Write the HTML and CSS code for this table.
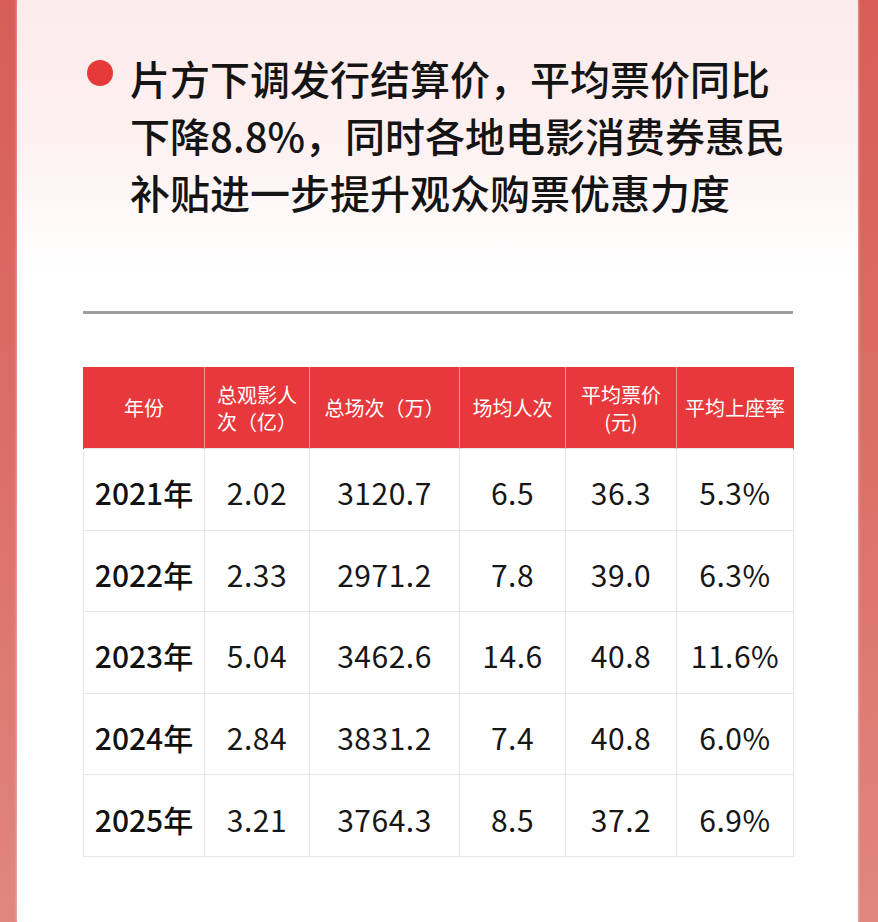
FILE: index.html
```html
<!DOCTYPE html>
<html lang="zh-CN">
<head>
<meta charset="utf-8">
<title>电影市场数据</title>
<link rel="stylesheet" href="styles.css">
</head>
<body>
<div class="page">
  <div class="card">
    <div class="title">
      <span class="dot"></span>
      <h1 class="title-text">片方下调发行结算价，平均票价同比<br>下降8.8%，同时各地电影消费券惠民<br>补贴进一步提升观众购票优惠力度</h1>
    </div>
    <div class="rule"></div>
    <table class="data">
      <colgroup>
        <col class="c1"><col class="c2"><col class="c3"><col class="c4"><col class="c5"><col class="c6">
      </colgroup>
      <thead>
        <tr>
          <th>年份</th>
          <th>总观影人<br>次（亿）</th>
          <th>总场次（万）</th>
          <th>场均人次</th>
          <th>平均票价<br>(元)</th>
          <th>平均上座率</th>
        </tr>
      </thead>
      <tbody>
        <tr><td class="year">2021年</td><td>2.02</td><td>3120.7</td><td>6.5</td><td>36.3</td><td>5.3%</td></tr>
        <tr><td class="year">2022年</td><td>2.33</td><td>2971.2</td><td>7.8</td><td>39.0</td><td>6.3%</td></tr>
        <tr><td class="year">2023年</td><td>5.04</td><td>3462.6</td><td>14.6</td><td>40.8</td><td>11.6%</td></tr>
        <tr><td class="year">2024年</td><td>2.84</td><td>3831.2</td><td>7.4</td><td>40.8</td><td>6.0%</td></tr>
        <tr><td class="year">2025年</td><td>3.21</td><td>3764.3</td><td>8.5</td><td>37.2</td><td>6.9%</td></tr>
      </tbody>
    </table>
  </div>
</div>
</body>
</html>
```

FILE: styles.css
```css
html, body {
  margin: 0;
  padding: 0;
}
body {
  font-family: "Noto Sans CJK SC", "Noto Sans", sans-serif;
  color: #161616;
  background: #fff;
}
.page {
  width: 878px;
  height: 922px;
  overflow: hidden;
  background: linear-gradient(180deg, #d85d58 0%, #dc6f68 50%, #e0877e 100%);
  padding: 0 20px 0 17px;
  box-sizing: border-box;
}
.card {
  height: 100%;
  background: linear-gradient(180deg, #fcebeb 0px, #fdf1f1 150px, #ffffff 270px, #ffffff 100%);
  padding: 50px 0 0 66px;
  box-sizing: border-box;
  box-shadow: 0 0 3px rgba(255, 255, 255, 0.6);
}
.title {
  display: flex;
  align-items: flex-start;
  padding-left: 4px;
}
.dot {
  flex: none;
  width: 26px;
  height: 26px;
  border-radius: 50%;
  background: #e5393a;
  margin-top: 10px;
  margin-right: 17px;
}
.title-text {
  margin: 0;
  font-size: 40px;
  line-height: 57px;
  font-weight: 500;
  color: #141414;
  white-space: nowrap;
}
.rule {
  width: 710px;
  height: 3px;
  background: #9d9d9d;
  margin-top: 90px;
}
.data {
  margin-top: 53px;
  width: 710px;
  border-collapse: collapse;
  table-layout: fixed;
}
.c1 { width: 121px; }
.c2 { width: 105px; }
.c3 { width: 150px; }
.c4 { width: 106px; }
.c5 { width: 111px; }
.c6 { width: 117px; }
.data th {
  background: #e7383b;
  color: #fff;
  font-size: 20px;
  font-weight: 400;
  line-height: 27px;
  height: 81px;
  padding: 0;
  text-align: center;
  border-left: 1px solid #f29a9a;
  border-right: 1px solid #f29a9a;
}
.data th:first-child { border-left: 1px solid #e7383b; }
.data th:last-child { border-right: 1px solid #e7383b; }
.data td {
  border: 1px solid #e6e6e6;
  height: 81.6px;
  padding: 6px 0 0 0;
  box-sizing: border-box;
  text-align: center;
  font-size: 30px;
  font-weight: 400;
  color: #161616;
  letter-spacing: 0.5px;
}
.data td.year {
  font-weight: 500;
  letter-spacing: 0;
  color: #111;
}
```
